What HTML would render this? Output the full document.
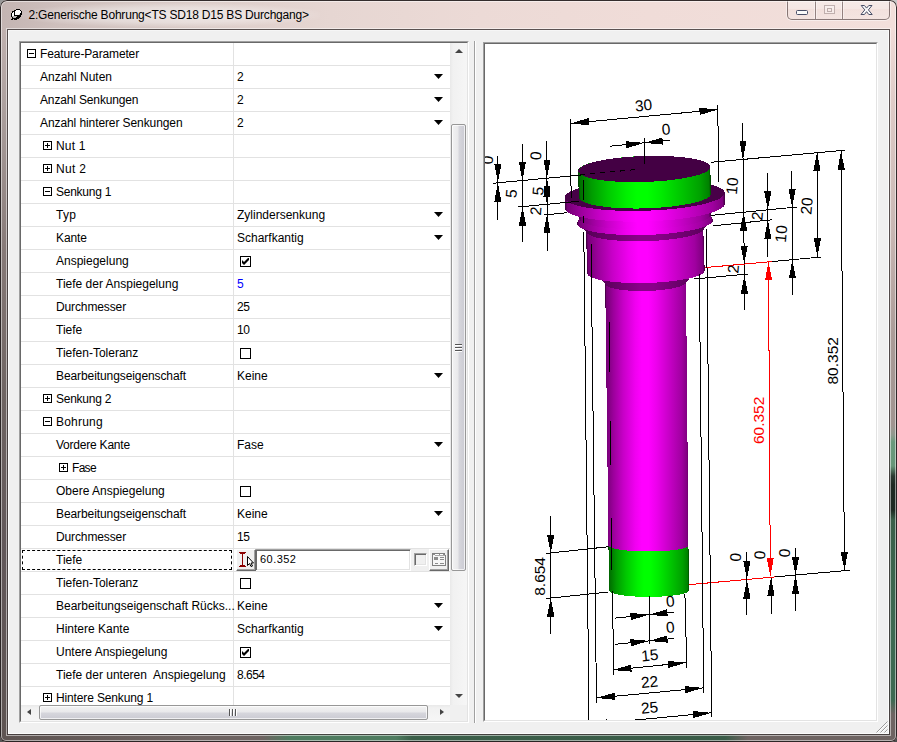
<!DOCTYPE html>
<html lang="de"><head><meta charset="utf-8"><title>2:Generische Bohrung</title>
<style>
*{box-sizing:border-box}
html,body{margin:0;padding:0}
body{width:897px;height:742px;overflow:hidden;background:#6e6e6e;font-family:"Liberation Sans",sans-serif;font-size:12px;color:#000;position:relative}
#win{position:absolute;left:0;top:0;width:897px;height:742px;border-radius:7px 7px 6px 6px;overflow:hidden;background:#6e6462}
#ftop{position:absolute;left:0;top:0;width:897px;height:30px;background:linear-gradient(to right,#c3b4b2 0,#cfc0bd 60px,#dccdc9 200px,#e6d6d2 330px,#ecdad6 480px,#f0dcd8 650px,#f2dfdb 897px)}
#fleft{position:absolute;left:0;top:30px;width:8px;height:712px;background:linear-gradient(to bottom,#c0b1af 0,#aea2a0 70px,#877a78 220px,#6e6462 370px,#62585a 520px,#5e5452 712px)}
#fright{position:absolute;left:889px;top:30px;width:8px;height:712px;background:linear-gradient(to bottom,#f0dcd8 0,#dfccc8 70px,#c9b8b4 200px,#ab9c98 305px,#a19490 395px,#8f9a8e 405px,#6a9a7c 412px,#679678 436px,#2a3a30 446px,#1e2a22 455px,#1e2a22 480px,#3a6049 490px,#3e6a52 600px,#3e6a52 670px,#6e6462 684px,#6e6462 712px)}
#fbot{position:absolute;left:0;top:734px;width:897px;height:8px;background:linear-gradient(to right,#5e5452 0,#6e6462 200px,#6e6462 262px,#4f7c60 290px,#4f7c60 396px,#3b5f49 412px,#3a5c48 725px,#6e6462 748px,#6e6462 897px)}
#fover{position:absolute;left:0;top:0;width:897px;height:742px;border-radius:7px 7px 6px 6px;box-shadow:inset 0 0 0 1px rgba(25,18,18,.88),inset 0 0 0 2px rgba(255,255,255,.5);pointer-events:none}
#glow{position:absolute;left:20px;top:3px;width:300px;height:24px;border-radius:12px;background:radial-gradient(ellipse at center,rgba(255,255,255,.55) 0,rgba(255,255,255,.35) 45%,rgba(255,255,255,0) 75%)}
#ticon{position:absolute;left:11px;top:9px;width:11px;height:11px}
#title{position:absolute;left:28.5px;top:8px;height:15px;line-height:15px;font-size:12px;white-space:nowrap;letter-spacing:-0.2px}
#cbtns{position:absolute;left:787px;top:0;width:103px;height:20px;border:1px solid rgba(70,50,50,.62);border-top:none;border-radius:0 0 5px 5px;background:linear-gradient(to bottom,rgba(255,255,255,.38) 0,rgba(255,255,255,.28) 45%,rgba(255,255,255,.08) 50%,rgba(255,255,255,.18) 100%);box-shadow:0 0 0 1px rgba(255,255,255,.45)}
#cbtns i{position:absolute;top:0;width:1px;height:19px;background:rgba(70,50,50,.55);box-shadow:1px 0 0 rgba(255,255,255,.4),-1px 0 0 rgba(255,255,255,.4)}
#client{position:absolute;left:8px;top:30px;width:881px;height:704px;background:#f0f0f0;box-shadow:0 0 0 1px rgba(30,22,22,.72),0 0 0 2px rgba(255,255,255,.5)}
#cl1{position:absolute;left:0;top:0;width:881px;height:704px;border:1px solid #fcfcfc;border-top-color:#f6f6f6}
.sunk{position:absolute;border:1px solid;border-color:#a0a0a0 #fff #fff #a0a0a0}
.sunk>.in{position:absolute;left:0;top:0;right:0;bottom:0;border:1px solid;border-color:#696969 #e3e3e3 #e3e3e3 #696969;background:#fff}
#grid{position:absolute;left:0;top:0;width:429px;height:662px;overflow:hidden;background:#fff}
.row{position:relative;height:23px;border-bottom:1px solid #e2e2e2;white-space:nowrap}
.row:before{content:"";position:absolute;left:212px;top:0;width:1px;height:23px;background:#e2e2e2}
.nm{position:absolute;top:0;height:22px;line-height:22px;letter-spacing:0}
.vl{position:absolute;left:216px;top:0;height:22px;line-height:22px;letter-spacing:0}
.bl{color:#0000ff}
.nu{letter-spacing:-0.5px}
.ex{position:absolute;top:6px;width:9px;height:9px;border:1px solid #000;background:#fff}
.ex:before{content:"";position:absolute;left:1px;top:3px;width:5px;height:1px;background:#000}
.ex.pl:after{content:"";position:absolute;left:3px;top:1px;width:1px;height:5px;background:#000}
.dd{position:absolute;left:413px;top:8px;width:9px;height:5px;background:#000;clip-path:polygon(0 0,100% 0,50% 100%)}
.cb{position:absolute;left:219px;top:6px;width:11px;height:11px;border:1px solid #000;background:#fff}
.ck{position:absolute;left:221px;top:8px}
.focus{position:absolute;left:1px;top:1px;width:210px;height:20px;border:1px dashed #000}
.ebtn1{z-index:2;position:absolute;left:215px;top:0;width:20px;height:22px;background:#f0f0f0;border:1px solid;border-color:#fff #696969 #696969 #fff;box-shadow:inset -1px -1px 0 #a0a0a0}
.ebtn1 svg{position:absolute;left:-1px;top:-1px}
.edit{position:absolute;left:234px;top:0;width:156px;height:22px;background:#fff;border:1px solid;border-color:#a0a0a0 #fff #fff #a0a0a0;box-shadow:inset 1px 1px 0 #696969,inset -1px -1px 0 #e3e3e3}
.edit span{position:absolute;left:4px;top:2px;line-height:15px;font-size:11px;letter-spacing:0.45px}
.egap{position:absolute;left:390px;top:0;width:18px;height:22px;background:#f0f0f0}
.dcb{position:absolute;left:3px;top:4px;width:13px;height:13px;background:#f0f0f0;border:1px solid;border-color:#a0a0a0 #fff #fff #a0a0a0;box-shadow:inset 1px 1px 0 #696969,inset -1px -1px 0 #e3e3e3}
.ebtn2{position:absolute;left:408px;top:0;width:20px;height:22px;background:#f0f0f0;border:1px solid;border-color:#fff #696969 #696969 #fff;box-shadow:inset -1px -1px 0 #a0a0a0}
.ebtn2 svg{position:absolute;left:-1px;top:-1px}
#vsb{position:absolute;left:429px;top:0;width:17px;height:662px;background:linear-gradient(to right,#e9e9e9 0,#f1f1f1 3px,#f6f6f6 100%)}
#vth{position:absolute;left:1px;top:81px;width:15px;height:447px;border:1px solid #979797;border-radius:2px;background:linear-gradient(to right,#f3f3f3 0,#e9e9eb 45%,#d6d6dc 55%,#cbcbd3 100%);box-shadow:inset 0 0 0 1px rgba(255,255,255,.7)}
#vth i{position:absolute;left:3px;width:7px;height:2px;background:linear-gradient(to bottom,#555 0,#555 50%,#fff 50%)}
#hsb{position:absolute;left:0;top:662px;width:429px;height:16px;background:linear-gradient(to bottom,#e9e9e9 0,#f1f1f1 3px,#f6f6f6 100%)}
#hth{position:absolute;left:18px;top:0;width:389px;height:15px;border:1px solid #979797;border-radius:2px;background:linear-gradient(to bottom,#f3f3f3 0,#e9e9eb 45%,#d6d6dc 55%,#cbcbd3 100%);box-shadow:inset 0 0 0 1px rgba(255,255,255,.7)}
#hth i{position:absolute;top:3px;width:2px;height:7px;background:linear-gradient(to right,#555 0,#555 50%,#fff 50%)}
#sbc{position:absolute;left:429px;top:662px;width:17px;height:16px;background:#f0f0f0}
.arr{position:absolute;width:0;height:0}
#split{position:absolute;left:466px;top:11px;width:2px;height:682px;background:linear-gradient(to right,#a0a0a0 0,#a0a0a0 50%,#fff 50%)}
#view{position:absolute;left:0;top:0;width:391px;height:676px;background:#fff;overflow:hidden}
#view svg{position:absolute;left:0;top:0}
#gripc{position:absolute;left:868px;top:691px}
</style></head><body>
<div style="position:absolute;left:0;top:0;width:10px;height:10px;background:#989898"></div><div style="position:absolute;left:887px;top:0;width:10px;height:10px;background:#c8c8c8"></div><div style="position:absolute;left:0;top:732px;width:10px;height:10px;background:#555"></div><div style="position:absolute;left:887px;top:732px;width:10px;height:10px;background:#4a4c4c"></div>
<div id="win">
<div id="ftop"></div><div id="fleft"></div><div id="fright"></div><div id="fbot"></div>
<div id="glow"></div>
<svg id="ticon" width="11" height="11" viewBox="0 0 11 11" shape-rendering="crispEdges"><rect x="5" y="0" width="4" height="1" fill="#000"/><rect x="3" y="1" width="2" height="1" fill="#000"/><rect x="5" y="1" width="4" height="1" fill="#fff"/><rect x="9" y="1" width="1" height="1" fill="#000"/><rect x="1" y="2" width="3" height="1" fill="#000"/><rect x="4" y="2" width="6" height="1" fill="#fff"/><rect x="10" y="2" width="1" height="1" fill="#000"/><rect x="1" y="3" width="1" height="1" fill="#000"/><rect x="2" y="3" width="1" height="1" fill="#fff"/><rect x="3" y="3" width="1" height="1" fill="#000"/><rect x="4" y="3" width="6" height="1" fill="#fff"/><rect x="10" y="3" width="1" height="1" fill="#000"/><rect x="0" y="4" width="1" height="1" fill="#000"/><rect x="1" y="4" width="2" height="1" fill="#fff"/><rect x="3" y="4" width="1" height="1" fill="#000"/><rect x="4" y="4" width="5" height="1" fill="#fff"/><rect x="9" y="4" width="2" height="1" fill="#000"/><rect x="0" y="5" width="1" height="1" fill="#000"/><rect x="1" y="5" width="2" height="1" fill="#fff"/><rect x="3" y="5" width="1" height="1" fill="#000"/><rect x="4" y="5" width="4" height="1" fill="#fff"/><rect x="8" y="5" width="1" height="1" fill="#b4b4b4"/><rect x="9" y="5" width="2" height="1" fill="#000"/><rect x="0" y="6" width="1" height="1" fill="#000"/><rect x="1" y="6" width="2" height="1" fill="#fff"/><rect x="3" y="6" width="7" height="1" fill="#000"/><rect x="0" y="7" width="1" height="1" fill="#000"/><rect x="1" y="7" width="5" height="1" fill="#b4b4b4"/><rect x="6" y="7" width="4" height="1" fill="#000"/><rect x="1" y="8" width="1" height="1" fill="#000"/><rect x="2" y="8" width="3" height="1" fill="#b4b4b4"/><rect x="5" y="8" width="4" height="1" fill="#000"/><rect x="1" y="9" width="7" height="1" fill="#000"/><rect x="0" y="10" width="2" height="1" fill="#000"/><rect x="3" y="10" width="3" height="1" fill="#000"/></svg>
<div id="title">2:Generische Bohrung&lt;TS SD18 D15 BS Durchgang&gt;</div>
<div id="cbtns"><i style="left:27px"></i><i style="left:54px"></i>
<svg width="101" height="20" viewBox="0 0 101 20" style="position:absolute;left:0;top:0">
<rect x="8.5" y="10.5" width="11" height="4" rx="1" fill="#fafafa" stroke="#474d66"/>
<rect x="36.5" y="5.5" width="10" height="8" fill="rgba(255,255,255,.35)" stroke="rgba(150,130,130,.55)"/>
<rect x="39.5" y="8.5" width="4" height="3" fill="none" stroke="rgba(150,130,130,.6)"/>
<path d="M73.200000000000003 5.5h3.2l2.2 2.6 2.2-2.6h3.2l-3.6 4.4 3.800000000000001 4.6h-3.4l-2.2-2.8-2.2 2.8h-3.400000000000002l3.800000000000001-4.6z" fill="#fafafa" stroke="#474d66" stroke-width="1" stroke-linejoin="round"/>
</svg></div>
<div id="client"><div id="cl1"></div>
<div class="sunk" style="left:11px;top:11px;width:450px;height:682px"><div class="in">
<div id="grid">
<div class="row"><i class="ex mi" style="left:6px"></i><span class="nm" style="left:19px;letter-spacing:-0.14px">Feature-Parameter</span></div>
<div class="row"><span class="nm" style="left:19px">Anzahl Nuten</span><span class="vl">2</span><i class="dd"></i></div>
<div class="row"><span class="nm" style="left:19px;letter-spacing:-0.15px">Anzahl Senkungen</span><span class="vl">2</span><i class="dd"></i></div>
<div class="row"><span class="nm" style="left:19px;letter-spacing:-0.09px">Anzahl hinterer Senkungen</span><span class="vl">2</span><i class="dd"></i></div>
<div class="row"><i class="ex pl" style="left:22px"></i><span class="nm" style="left:35px;letter-spacing:0.18px">Nut 1</span></div>
<div class="row"><i class="ex pl" style="left:22px"></i><span class="nm" style="left:35px;letter-spacing:0.30px">Nut 2</span></div>
<div class="row"><i class="ex mi" style="left:22px"></i><span class="nm" style="left:35px;letter-spacing:-0.26px">Senkung 1</span></div>
<div class="row"><span class="nm" style="left:35px;letter-spacing:0.25px">Typ</span><span class="vl">Zylindersenkung</span><i class="dd"></i></div>
<div class="row"><span class="nm" style="left:35px;letter-spacing:-0.12px">Kante</span><span class="vl">Scharfkantig</span><i class="dd"></i></div>
<div class="row"><span class="nm" style="left:35px">Anspiegelung</span><i class="cb"></i><svg class="ck" width="7" height="7" viewBox="0 0 7 7"><path d="M0 2v3l2 2 5-5V-1L2 4z" fill="#000"/></svg></div>
<div class="row"><span class="nm" style="left:35px">Tiefe der Anspiegelung</span><span class="vl bl">5</span></div>
<div class="row"><span class="nm" style="left:35px;letter-spacing:-0.12px">Durchmesser</span><span class="vl nu">25</span></div>
<div class="row"><span class="nm" style="left:35px">Tiefe</span><span class="vl nu">10</span></div>
<div class="row"><span class="nm" style="left:35px">Tiefen-Toleranz</span><i class="cb"></i></div>
<div class="row"><span class="nm" style="left:35px;letter-spacing:-0.09px">Bearbeitungseigenschaft</span><span class="vl">Keine</span><i class="dd"></i></div>
<div class="row"><i class="ex pl" style="left:22px"></i><span class="nm" style="left:35px;letter-spacing:-0.26px">Senkung 2</span></div>
<div class="row"><i class="ex mi" style="left:22px"></i><span class="nm" style="left:35px;letter-spacing:0.20px">Bohrung</span></div>
<div class="row"><span class="nm" style="left:35px;letter-spacing:-0.22px">Vordere Kante</span><span class="vl">Fase</span><i class="dd"></i></div>
<div class="row"><i class="ex pl" style="left:38px"></i><span class="nm" style="left:51px;letter-spacing:-0.70px">Fase</span></div>
<div class="row"><span class="nm" style="left:35px">Obere Anspiegelung</span><i class="cb"></i></div>
<div class="row"><span class="nm" style="left:35px;letter-spacing:-0.09px">Bearbeitungseigenschaft</span><span class="vl">Keine</span><i class="dd"></i></div>
<div class="row"><span class="nm" style="left:35px;letter-spacing:-0.12px">Durchmesser</span><span class="vl nu">15</span></div>
<div class="row"><span class="nm" style="left:35px">Tiefe</span><b class="focus"></b><div class="ebtn1"><svg width="20" height="22" viewBox="0 0 20 22" shape-rendering="crispEdges"><path d="M3 3h7v1h-1v1h-2v11h2v1h1v1h-7v-1h1v-1h2v-11h-2v-1h-1z" fill="#8b0000"/><path d="M11.5 7.5V16.5L13.5 14.500000000000002L15 17.5L16.5 17L15 14H17.5Z" fill="#fff" stroke="#000" stroke-width="1" shape-rendering="auto"/></svg></div><div class="edit"><span>60.352</span></div><div class="egap"><i class="dcb"></i></div><div class="ebtn2"><svg width="20" height="22" viewBox="0 0 20 22" shape-rendering="crispEdges"><path d="M3.5 4.5H15.5V6.5H16.5V16.5H3.5Z" fill="#f6f6f6" stroke="#808080"/><path d="M4 5h11v1h-11z" fill="#909090"/><path d="M6 6h10v1h-10z" fill="#a8a8a8"/><path d="M6 5h4v1h-4zM11 5h3v1h-3z" fill="#fff"/><path d="M5 8h4v3h-4zM11 8h4v1h-4zM11 10h4v1h-4zM6 14h3v1h-3zM11 14h4v1h-4z" fill="#8c8c8c"/></svg></div></div>
<div class="row"><span class="nm" style="left:35px">Tiefen-Toleranz</span><i class="cb"></i></div>
<div class="row"><span class="nm" style="left:35px">Bearbeitungseigenschaft Rücks...</span><span class="vl">Keine</span><i class="dd"></i></div>
<div class="row"><span class="nm" style="left:35px">Hintere Kante</span><span class="vl">Scharfkantig</span><i class="dd"></i></div>
<div class="row"><span class="nm" style="left:35px">Untere Anspiegelung</span><i class="cb"></i><svg class="ck" width="7" height="7" viewBox="0 0 7 7"><path d="M0 2v3l2 2 5-5V-1L2 4z" fill="#000"/></svg></div>
<div class="row"><span class="nm" style="left:35px">Tiefe der unteren&nbsp; Anspiegelung</span><span class="vl nu">8.654</span></div>
<div class="row"><i class="ex pl" style="left:22px"></i><span class="nm" style="left:35px;letter-spacing:-0.14px">Hintere Senkung 1</span></div>
</div>
<div id="vsb"><div id="vth"><i style="top:219px"></i><i style="top:222px"></i><i style="top:225px"></i></div>
<span class="arr" style="left:5px;top:6px;border-left:4px solid transparent;border-right:4px solid transparent;border-bottom:4px solid #444"></span>
<span class="arr" style="left:5px;top:651px;border-left:4px solid transparent;border-right:4px solid transparent;border-top:4px solid #444"></span>
</div>
<div id="hsb"><div id="hth"><i style="left:189px"></i><i style="left:192px"></i><i style="left:195px"></i></div>
<span class="arr" style="left:6px;top:4px;border-top:3.5px solid transparent;border-bottom:3.5px solid transparent;border-right:4px solid #444"></span>
<span class="arr" style="left:419px;top:4px;border-top:3.5px solid transparent;border-bottom:3.5px solid transparent;border-left:4px solid #444"></span>
</div>
<div id="sbc"></div>
</div></div>
<div id="split"></div>
<div class="sunk" style="left:475px;top:12px;width:395px;height:680px"><div class="in">
<div id="view">
<svg width="391" height="676" viewBox="485 44 391 676">
<defs>
<linearGradient id="gm" x1="0" x2="1" y1="0" y2="0"><stop offset="0" stop-color="#3c003c"/><stop offset=".015" stop-color="#760076"/><stop offset=".1" stop-color="#9c009c"/><stop offset=".22" stop-color="#c800c8"/><stop offset=".36" stop-color="#f000f0"/><stop offset=".44" stop-color="#ff00ff"/><stop offset=".52" stop-color="#ff00ff"/><stop offset=".62" stop-color="#ec00ec"/><stop offset=".78" stop-color="#c400c4"/><stop offset=".92" stop-color="#a000a0"/><stop offset=".985" stop-color="#800080"/><stop offset="1" stop-color="#400040"/></linearGradient>
<linearGradient id="gl" x1="0" x2="1" y1="0" y2="0"><stop offset="0" stop-color="#500050"/><stop offset=".015" stop-color="#8a008a"/><stop offset=".1" stop-color="#b000b0"/><stop offset=".22" stop-color="#da08da"/><stop offset=".36" stop-color="#fb18fb"/><stop offset=".48" stop-color="#ff30ff"/><stop offset=".62" stop-color="#f414f4"/><stop offset=".78" stop-color="#d000d0"/><stop offset=".92" stop-color="#ac00ac"/><stop offset="1" stop-color="#500050"/></linearGradient>
<linearGradient id="gg" x1="0" x2="1" y1="0" y2="0"><stop offset="0" stop-color="#003c00"/><stop offset=".015" stop-color="#007000"/><stop offset=".1" stop-color="#009c00"/><stop offset=".22" stop-color="#00c800"/><stop offset=".36" stop-color="#00f000"/><stop offset=".44" stop-color="#00ff00"/><stop offset=".52" stop-color="#00ff00"/><stop offset=".62" stop-color="#00ec00"/><stop offset=".78" stop-color="#00c400"/><stop offset=".92" stop-color="#00a000"/><stop offset=".985" stop-color="#008000"/><stop offset="1" stop-color="#004000"/></linearGradient>
<linearGradient id="gd" x1="0" x2="1" y1="0" y2="0"><stop offset="0" stop-color="#3a003a"/><stop offset=".1" stop-color="#5a005a"/><stop offset=".45" stop-color="#8a008a"/><stop offset=".58" stop-color="#8a008a"/><stop offset=".9" stop-color="#600060"/><stop offset="1" stop-color="#3a003a"/></linearGradient>
</defs>
<rect x="485" y="44" width="391" height="676" fill="#fff"/>
<g stroke="#000" stroke-width="1" fill="#000" shape-rendering="crispEdges">
</g>
<g shape-rendering="crispEdges">
<path d="M608.5 545.5L609 590.5A40 6.4 0 0 0 689 590.5L688.5 545.5A40 6 0 0 0 608.5 545.5Z" fill="url(#gg)" transform="rotate(-0.1 648.7 568)"/>
<path d="M605.2 283L608.5 545.5A40 6 0 0 0 688.5 545.5L686 283A40.4 7.5 0 0 0 605.2 283Z" fill="url(#gm)"/>
<path d="M594.5 272L605.1 283A40.5 8 0 0 0 686.1 283L696.5 272A51 9.5 0 0 0 594.5 272Z" fill="url(#gd)" transform="rotate(-1.3 645.6 277.5)"/>
<path d="M586.4 230L586.8 272A58.7 11 0 0 0 704.2 272L703.8 230A58.7 11.2 0 0 0 586.4 230Z" fill="url(#gm)" transform="rotate(-1.4 645.3 251)"/>
<path d="M577 222L586.4 230A58.7 11.2 0 0 0 703.8 230L713 222A68 13 0 0 0 577 222Z" fill="url(#gd)" transform="rotate(-1.6 645 226)"/>
<path d="M579.1 216.5L577 222A68 13 0 0 0 713 222L710.7 216.5A65.8 12.7 0 0 0 579.1 216.5Z" fill="url(#gm)" transform="rotate(-1.6 644.9 219.2)"/>
<path d="M579 206L579.1 216.5A65.8 12.7 0 0 0 710.7 216.5L710.6 206A65.8 12.7 0 0 0 579 206Z" fill="url(#gm)" transform="rotate(-1.6 644.9 211.2)"/>
<path d="M564.7 195.2L564.8 206A80 15.5 0 0 0 724.8 206L724.7 195.2A80 15.6 0 0 0 564.7 195.2Z" fill="url(#gm)" transform="rotate(-1.7 644.7 200.6)"/>
<ellipse cx="644.7" cy="195.2" rx="80" ry="15.6" fill="#480048" transform="rotate(-1.7 644.7 195.2)"/>
<path d="M578.2 169L578.5 195.5A66.2 12.9 0 0 0 710.9 195.5L710.6 169A66.2 13 0 0 0 578.2 169Z" fill="url(#gg)" transform="rotate(-1.7 644.5 182.2)"/>
<ellipse cx="644.4" cy="169" rx="66.2" ry="13" fill="#440044" transform="rotate(-1.8 644.4 169)"/>
</g>
<g stroke="#000" stroke-width="1" fill="#000" shape-rendering="crispEdges">
<path d="M570.5 119L571.1 197.8"/>
<path d="M717.9 105L718.3 182.5"/>
<path d="M570.5 123.4L717.9 109.6"/>
<path d="M570.5 123.4L588.6 118.1L589.3 125.3Z" stroke="none"/>
<path d="M717.9 109.6L699.8 114.9L699.1 107.7Z" stroke="none"/>
<path d="M644.3 138L644.3 163.6"/>
<path d="M610.2 146.2L669.7 140.2"/>
<path d="M644.3 142.9L626.3 148.3L625.5 141.2Z" stroke="none"/>
<path d="M644.3 142.9L662.3 137.5L663.1 144.6Z" stroke="none"/>
<path d="M580 174.7L640.3 169.2" stroke-dasharray="5 5" fill="none"/>
<path d="M492.6 183.3L581.1 175"/>
<path d="M711 162.3L845 150.2"/>
<path d="M497.9 155.8L497.9 219.7"/>
<path d="M497.9 182.6L494.3 164.1L501.5 164.1Z" stroke="none"/>
<path d="M497.9 183.2L501.5 201.7L494.3 201.7Z" stroke="none"/>
<path d="M522.2 144.4L522.6 242.5"/>
<path d="M522.4 180.3L518.8 161.8L526 161.8Z" stroke="none"/>
<path d="M522.5 207L526.1 225.5L518.9 225.5Z" stroke="none"/>
<path d="M546.8 141L547.2 250.7"/>
<path d="M547 178L543.4 159.5L550.6 159.5Z" stroke="none"/>
<path d="M547 178.5L550.6 197L543.4 197Z" stroke="none"/>
<path d="M547 204.2L543.4 185.7L550.6 185.7Z" stroke="none"/>
<path d="M547 214.7L550.6 233.2L543.4 233.2Z" stroke="none"/>
<path d="M518 207L578.5 201.3"/>
<path d="M544.3 215L566.7 212.7"/>
<path d="M742.6 123L744.8 310"/>
<path d="M743 159.2L739.4 140.7L746.6 140.7Z" stroke="none"/>
<path d="M743.6 212.3L747.2 230.8L740 230.8Z" stroke="none"/>
<path d="M744.2 264L740.6 245.5L747.8 245.5Z" stroke="none"/>
<path d="M744.4 275L748 293.5L740.8 293.5Z" stroke="none"/>
<path d="M767.6 173L768 256.5"/>
<path d="M767.8 209.8L764.2 191.3L771.4 191.3Z" stroke="none"/>
<path d="M767.9 220.2L771.5 238.7L764.3 238.7Z" stroke="none"/>
<path d="M791.9 171L792.6 295"/>
<path d="M792.1 207.5L788.5 189L795.7 189Z" stroke="none"/>
<path d="M792.4 259.8L796 278.3L788.8 278.3Z" stroke="none"/>
<path d="M817 151.8L817.4 257"/>
<path d="M817 152.6L820.6 171.1L813.4 171.1Z" stroke="none"/>
<path d="M817.4 256.8L813.8 238.3L821 238.3Z" stroke="none"/>
<path d="M841 151L844.5 570.2"/>
<path d="M841 151.2L844.8 169.7L837.6 169.7Z" stroke="none"/>
<path d="M844.5 570.2L840.7 551.7L847.9 551.7Z" stroke="none"/>
<path d="M711 215.4L796.8 207"/>
<path d="M712.8 225.9L772 219.8"/>
<path d="M772.3 261.5L821.5 257"/>
<path d="M694.4 279L747.8 274"/>
<path d="M704.9 267.6L772.3 261.5" stroke="#f00"/>
<path d="M768.5 261.5L770.3 576.5" stroke="#f00"/>
<path d="M768.5 261.7L772.2 280.2L765 280.2Z" stroke="none" fill="#f00"/>
<path d="M770.3 576.3L766.6 557.8L773.8 557.8Z" stroke="none" fill="#f00"/>
<path d="M688.9 584.7L774.8 576.9" stroke="#f00"/>
<path d="M774.8 576.9L849.9 570.2"/>
<path d="M746.9 552.3L746.9 615.4"/>
<path d="M746.9 579.5L743.3 561L750.5 561Z" stroke="none"/>
<path d="M746.9 580L750.5 598.5L743.3 598.5Z" stroke="none"/>
<path d="M771 577.5L771 613.6"/>
<path d="M771 577.6L774.6 596.1L767.4 596.1Z" stroke="none"/>
<path d="M795.5 547.9L795.5 611.4"/>
<path d="M795.5 575L791.9 556.5L799.1 556.5Z" stroke="none"/>
<path d="M795.5 575.3L799.1 593.8L791.9 593.8Z" stroke="none"/>
<path d="M550.8 516L550.8 634"/>
<path d="M550.8 553L547.1 534.5L554.4 534.5Z" stroke="none"/>
<path d="M550.8 598L554.4 616.5L547.1 616.5Z" stroke="none"/>
<path d="M546.4 553.4L607.7 546.8"/>
<path d="M546.4 598.5L608.3 592"/>
<path d="M583.2 180.3L583.4 200.5"/>
<path d="M583.6 216L583.6 222.5"/>
<path d="M583.8 231.7L589 722"/>
<path d="M591 241.6L596.5 703"/>
<path d="M609.1 322L609.7 372"/>
<path d="M610.2 421L610.7 465"/>
<path d="M611.3 518L611.9 570"/>
<path d="M612.6 591L613.5 675.4"/>
<path d="M684.9 593.6L686.8 668.3"/>
<path d="M699.3 274L703.7 693.2"/>
<path d="M706.6 229L711.7 717"/>
<path d="M649 596L649 644.3"/>
<path d="M614.7 618.1L674.3 612.2"/>
<path d="M649 614.7L630.9 620.1L630.2 612.9Z" stroke="none"/>
<path d="M649 614.7L667.1 609.3L667.8 616.5Z" stroke="none"/>
<path d="M614.7 644.3L674.3 638.4"/>
<path d="M649 640.9L630.9 646.3L630.2 639.1Z" stroke="none"/>
<path d="M649 640.9L667.1 635.5L667.8 642.7Z" stroke="none"/>
<path d="M612.9 670L686.4 662.6"/>
<path d="M612.9 670L630.9 664.6L631.7 671.7Z" stroke="none"/>
<path d="M686.4 662.6L668.4 668L667.6 660.9Z" stroke="none"/>
<path d="M596.4 698L703.3 687.9"/>
<path d="M596.4 698L614.5 692.7L615.2 699.8Z" stroke="none"/>
<path d="M703.3 687.9L685.2 693.2L684.5 686.1Z" stroke="none"/>
<path d="M589 724.4L711.5 712.8"/>
<path d="M711.5 712.8L693.4 718.1L692.7 711Z" stroke="none"/>
<path d="M589 724.4L607.1 719.1L607.8 726.2Z" stroke="none"/>
</g>
<g font-family="'Liberation Sans',sans-serif" font-size="15.5" text-anchor="middle" fill="#000">
<text x="644" y="110.6" transform="rotate(-5.4 644 110.6)">30</text>
<text x="666.6" y="134.5" transform="rotate(-5.4 666.6 134.5)">0</text>
<text x="670.7" y="606.6" transform="rotate(-5.4 670.7 606.6)">0</text>
<text x="670.7" y="632.6" transform="rotate(-5.4 670.7 632.6)">0</text>
<text x="650.3" y="660.6" transform="rotate(-5.4 650.3 660.6)">15</text>
<text x="650" y="687.2" transform="rotate(-5.4 650 687.2)">22</text>
<text x="650" y="713" transform="rotate(-5.4 650 713)">25</text>
<text x="493" y="160.5" transform="rotate(-85 493 160.5)">0</text>
<text x="516.6" y="193.9" transform="rotate(-85 516.6 193.9)">5</text>
<text x="541.2" y="156.3" transform="rotate(-85 541.2 156.3)">0</text>
<text x="543.3" y="191.5" transform="rotate(-85 543.3 191.5)">5</text>
<text x="541.2" y="211.5" transform="rotate(-85 541.2 211.5)">2</text>
<text x="737.4" y="186.5" transform="rotate(-85 737.4 186.5)">10</text>
<text x="738.6" y="269.5" transform="rotate(-85 738.6 269.5)">2</text>
<text x="762.6" y="216.5" transform="rotate(-85 762.6 216.5)">2</text>
<text x="786.6" y="234.3" transform="rotate(-85 786.6 234.3)">10</text>
<text x="812" y="206.5" transform="rotate(-85 812 206.5)">20</text>
<text x="837.7" y="360.8" transform="rotate(-90 837.7 360.8)">80.352</text>
<text x="764.4" y="420.4" transform="rotate(-90 764.4 420.4)" fill="#f00">60.352</text>
<text x="740.9" y="557.7" transform="rotate(-85 740.9 557.7)">0</text>
<text x="765.2" y="555.5" transform="rotate(-85 765.2 555.5)">0</text>
<text x="789.9" y="553.5" transform="rotate(-85 789.9 553.5)">0</text>
<text x="545.4" y="576.4" transform="rotate(-90 545.4 576.4)">8.654</text>
</g>
</svg>
</div></div></div>
<svg id="gripc" width="12" height="12" viewBox="0 0 12 12"><path d="M0.5 11.5l11-11M4.5 11.5l7-7M8.5 11.5l3-3" stroke="#9a9a9a" stroke-width="1"/><path d="M1.5 11.5l10-10M5.5 11.5l6-6M9.5 11.5l2-2" stroke="#fff" stroke-width="1"/></svg>
</div>
<div id="fover"></div>
</div>
</body></html>
